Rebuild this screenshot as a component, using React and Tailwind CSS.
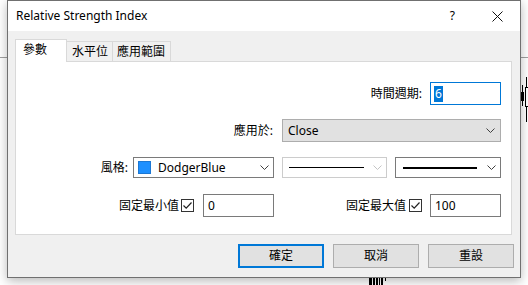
import React from 'react';

const font = "font-['Noto_Sans','Noto_Sans_CJK_TC',sans-serif]";

function Chevron({ disabled }) {
  return (
    <svg width="9" height="5" viewBox="0 0 9 5" className="shrink-0">
      <path d="M0.5 0.5 L4.5 4.5 L8.5 0.5" fill="none" stroke={disabled ? '#c4c4c4' : '#404040'} strokeWidth="1" />
    </svg>
  );
}

function Check() {
  return (
    <div className="flex h-[13px] w-[13px] items-center justify-center border border-[#333] bg-white">
      <svg width="11" height="11" viewBox="0 0 11 11">
        <path d="M1.5 5.5 L4.2 8.2 L9.5 2.5" fill="none" stroke="#222" strokeWidth="1.2" />
      </svg>
    </div>
  );
}

function TextBox({ value }) {
  return (
    <div className="flex h-[23px] w-[71px] items-center border border-[#7a7a7a] bg-white pl-[4px] text-[12px] leading-none text-black">
      {value}
    </div>
  );
}

function Chart() {
  return (
    <svg className="absolute inset-0" width="528" height="285" viewBox="0 0 528 285">
      <rect width="528" height="285" fill="#ffffff" />
      <line x1="0" y1="57.5" x2="528" y2="57.5" stroke="#a0a0a0" />
      <line x1="522.5" y1="85" x2="522.5" y2="106" stroke="#000" />
      <rect x="521" y="92" width="3" height="9" fill="#000" />
      <line x1="526.5" y1="77" x2="526.5" y2="122" stroke="#000" />
      <rect x="525.5" y="87.5" width="3" height="19" fill="#fff" stroke="#000" />
      <rect x="369" y="278" width="3" height="7" fill="#000" />
      <rect x="373" y="278" width="2" height="7" fill="#000" />
      <rect x="376" y="278" width="2" height="7" fill="#000" />
      <rect x="379" y="278" width="1" height="7" fill="#000" />
      <rect x="381" y="278" width="2" height="7" fill="#000" />
      <rect x="385" y="278" width="1" height="3" fill="#000" />
    </svg>
  );
}

export default function App() {
  return (
    <div className={`relative h-[285px] w-[528px] overflow-hidden bg-white ${font}`}>
      <Chart />

      <div className="absolute left-[7px] top-0 flex h-[278px] w-[514px] flex-col border border-[#707070] bg-[#f0f0f0] shadow-[0_3px_10px_rgba(0,0,0,0.28)]">
        {/* title bar */}
        <div className="flex h-[30px] shrink-0 items-center bg-white pl-[8px] text-[12px] text-black">
          <span className="leading-none">Relative Strength Index</span>
          <span className="ml-auto mr-[37px] leading-none">?</span>
          <svg width="11" height="11" viewBox="0 0 11 11" className="mr-[17px]">
            <path d="M0.5 0.5 L10.5 10.5 M10.5 0.5 L0.5 10.5" stroke="#111" strokeWidth="1" />
          </svg>
        </div>

        {/* tabs + panel */}
        <div className="flex flex-col pl-[7px] pr-[8px] pt-[8px]">
          <div className="relative z-10 -mb-px flex items-end text-[12px] leading-none text-black">
            <div className="flex h-[23px] w-[52px] items-center border border-b-0 border-[#d9d9d9] bg-white pb-[2px] pl-[7px]">參數</div>
            <div className="mb-px flex h-[20px] w-[46px] items-center border border-b-0 border-l-0 border-[#d9d9d9] pl-[5px] pt-[1px]">水平位</div>
            <div className="mb-px flex h-[20px] w-[58px] items-center border border-b-0 border-l-0 border-[#d9d9d9] pl-[4px] pt-[1px]">應用範圍</div>
          </div>

          <div className="flex h-[174px] flex-col border border-[#d9d9d9] bg-white pr-[10px] pt-[20px] text-[12px] leading-none text-black">
            {/* row 1 */}
            <div className="flex items-center justify-end gap-[8px]">
              <span>時間週期:</span>
              <div className="flex h-[23px] w-[71px] items-center border border-[#0078d7] bg-white pl-[3px]">
                <span className="flex h-[16px] items-center bg-[#0078d7] px-px text-white">6</span>
              </div>
            </div>

            {/* row 2 */}
            <div className="mt-[14px] flex items-center justify-end gap-[9px]">
              <span>應用於:</span>
              <div className="flex h-[23px] w-[219px] items-center border border-[#adadad] bg-[#e1e1e1] pl-[5px] pr-[5px]">
                <span>Close</span>
                <span className="ml-auto"><Chevron /></span>
              </div>
            </div>

            {/* row 3 */}
            <div className="mt-[15px] flex items-center justify-end">
              <span className="mr-[5px]">風格:</span>
              <div className="flex h-[21px] w-[141px] items-center border border-[#7a7a7a] bg-white pl-[4px] pr-[4px]">
                <span className="h-[13px] w-[13px] border border-[#1c78d4] bg-[#1e90ff]" />
                <span className="ml-[7px]">DodgerBlue</span>
                <span className="ml-auto"><Chevron /></span>
              </div>
              <div className="ml-[8px] flex h-[21px] w-[105px] items-center border border-[#cccccc] bg-white pl-[6px] pr-[4px]">
                <span className="h-px w-[75px] bg-black" />
                <span className="ml-auto"><Chevron disabled /></span>
              </div>
              <div className="ml-[8px] flex h-[21px] w-[106px] items-center border border-[#7a7a7a] bg-white pl-[7px] pr-[4px]">
                <span className="h-[2px] w-[74px] bg-black" />
                <span className="ml-auto"><Chevron /></span>
              </div>
            </div>

            {/* row 4 */}
            <div className="mt-[16px] flex items-center justify-end">
              <div className="flex items-center">
                <span className="mr-[2px]">固定最小值</span>
                <Check />
                <span className="ml-[9px]"><TextBox value="0" /></span>
              </div>
              <div className="ml-[8px] flex w-[219px] items-center justify-end">
                <span className="mr-[3px]">固定最大值</span>
                <Check />
                <span className="ml-[8px]"><TextBox value="100" /></span>
              </div>
            </div>
          </div>
        </div>

        {/* buttons */}
        <div className="mt-[9px] flex justify-end gap-[9px] pr-[6px] text-[12px] leading-none text-black">
          <button className="flex h-[24px] w-[86px] items-center justify-center border-2 border-[#0078d7] bg-[#e1e1e1]">確定</button>
          <button className="flex h-[24px] w-[86px] items-center justify-center border border-[#adadad] bg-[#e1e1e1]">取消</button>
          <button className="flex h-[24px] w-[86px] items-center justify-center border border-[#adadad] bg-[#e1e1e1]">重設</button>
        </div>
      </div>
    </div>
  );
}
